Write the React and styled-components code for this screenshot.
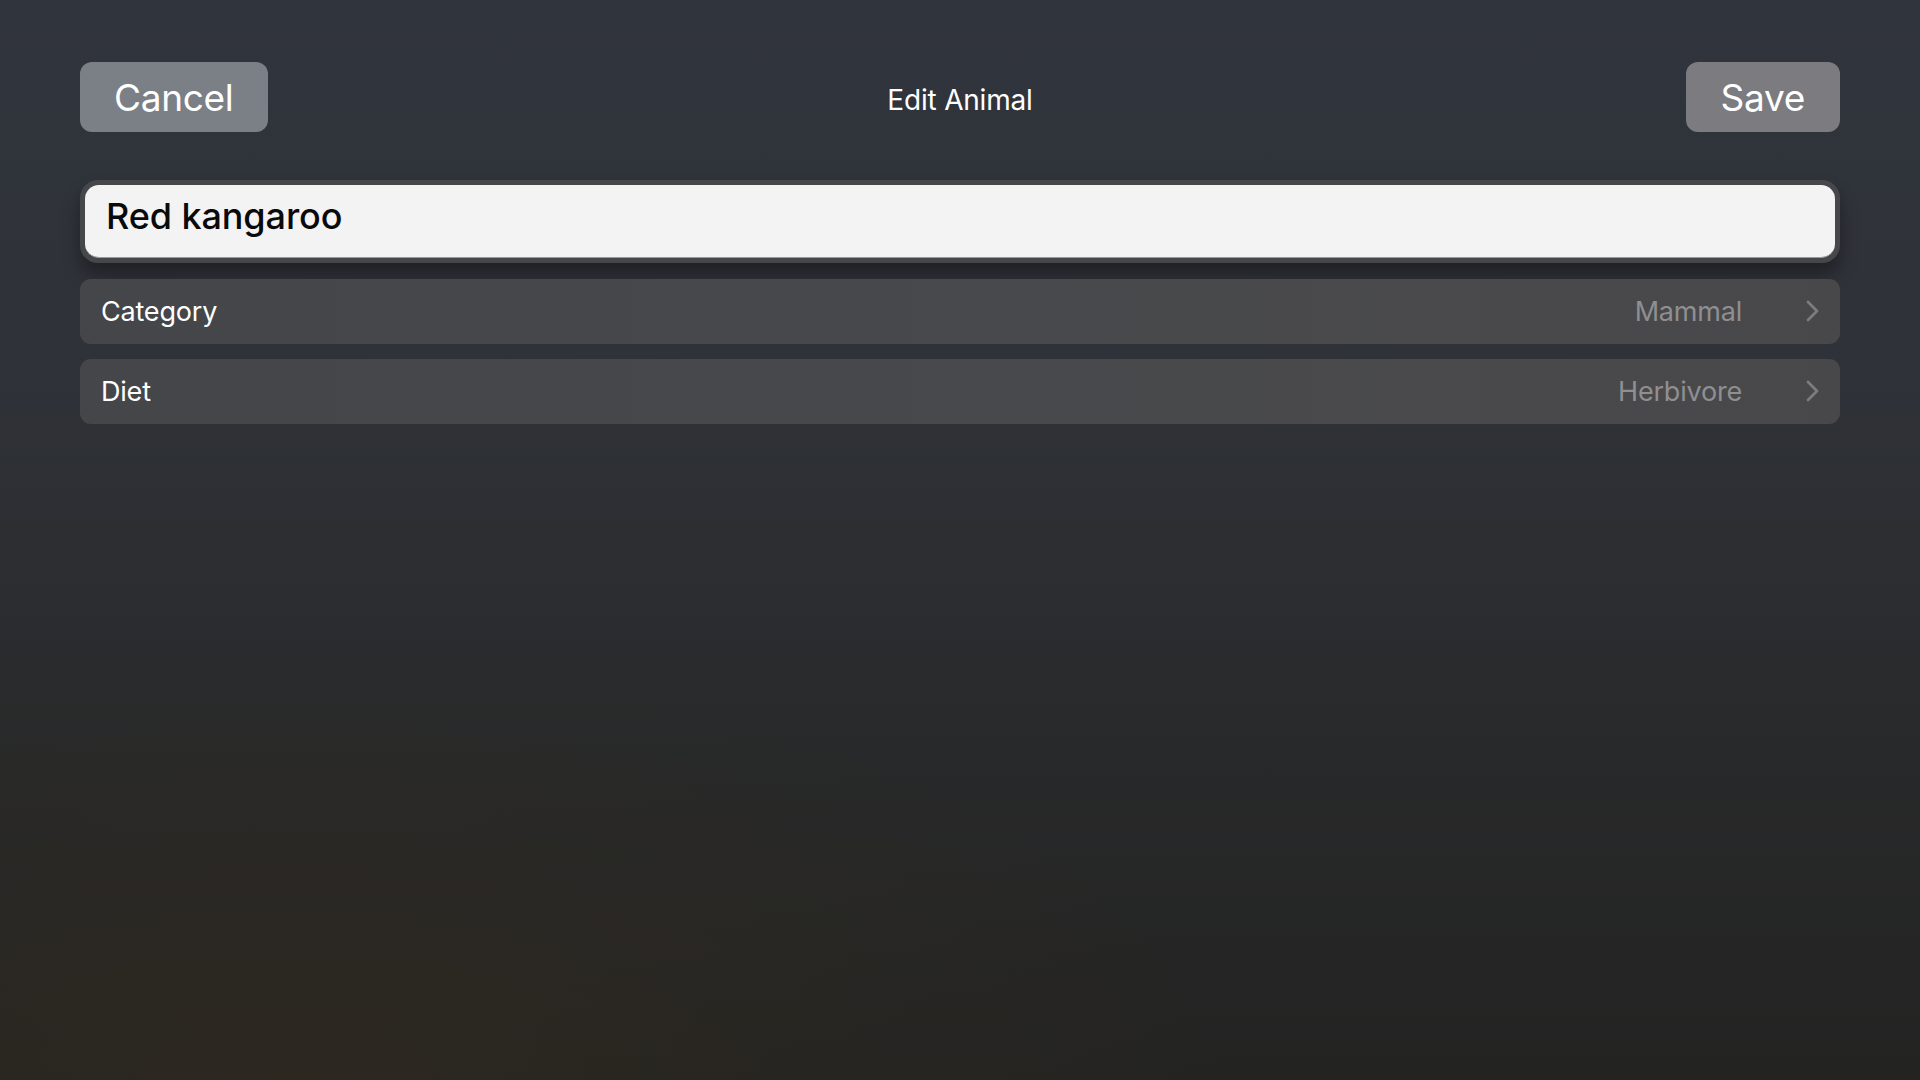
import React from "react";
import styled, { createGlobalStyle } from "styled-components";

const GlobalStyle = createGlobalStyle`
  html, body {
    margin: 0;
    padding: 0;
    height: 100%;
  }
  body {
    font-family: Inter, "Liberation Sans", Arial, sans-serif;
    background: #2a2b2d;
  }
`;

const Screen = styled.div`
  width: 1920px;
  height: 1080px;
  box-sizing: border-box;
  padding: 62px 80px 0 80px;
  background:
    radial-gradient(ellipse 70% 55% at 15% 100%, rgba(52, 44, 30, 0.55), rgba(52, 44, 30, 0) 70%),
    linear-gradient(180deg, #30343c 0%, #2f3238 35%, #28292a 70%, #232322 100%);
  overflow: hidden;
`;

const TopBar = styled.div`
  display: grid;
  grid-template-columns: 1fr auto 1fr;
  align-items: center;
  height: 70px;
`;

const BarButton = styled.button`
  justify-self: ${(p) => p.$side};
  height: 70px;
  padding: 0 ${(p) => p.$pad}px;
  border: none;
  border-radius: 12px;
  background: ${(p) => p.$bg};
  color: #ffffff;
  font-family: inherit;
  font-size: 37px;
  font-weight: 400;
  letter-spacing: -0.3px;
  cursor: pointer;
`;

const Title = styled.h1`
  margin: 5px 0 0;
  font-size: 28px;
  font-weight: 400;
  color: #ffffff;
  letter-spacing: -0.2px;
`;

const FieldFrame = styled.div`
  margin-top: 48px;
  padding: 5px;
  border-radius: 18px;
  background: #45474b;
  box-shadow: 0 12px 18px rgba(0, 0, 0, 0.35);
`;

const NameInput = styled.div`
  height: 73px;
  box-sizing: border-box;
  padding: 9px 21px 0;
  border-radius: 14px;
  background: #f3f3f3;
  border-bottom: 1px solid #9a9a9a;
  color: #0a0a0a;
  font-size: 36px;
  font-weight: 500;
  letter-spacing: -0.1px;
`;

const Rows = styled.div`
  display: flex;
  flex-direction: column;
  gap: 15px;
  margin-top: 16px;
`;

const Row = styled.div`
  display: flex;
  align-items: center;
  height: 65px;
  box-sizing: border-box;
  padding: 0 20px 0 21px;
  border-radius: 11px;
  background: linear-gradient(90deg, #44464a 0%, #46484b 45%, #4a4a4c 75%, #48484a 100%);
`;

const Label = styled.span`
  flex: 1;
  color: #ffffff;
  font-size: 27px;
  letter-spacing: -0.2px;
`;

const Value = styled.span`
  color: #8f8f92;
  font-size: 27px;
  letter-spacing: -0.2px;
`;

const Chevron = styled.svg`
  width: 14px;
  height: 22px;
  margin-left: 64px;
  margin-bottom: 2px;
`;

function Arrow() {
  return (
    <Chevron viewBox="0 0 14 22" fill="none">
      <path d="M2 2 L11 11 L2 20" stroke="#7c7c7f" strokeWidth="2.8" strokeLinecap="round" strokeLinejoin="round" />
    </Chevron>
  );
}

const fields = [
  { label: "Category", value: "Mammal" },
  { label: "Diet", value: "Herbivore" },
];

export default function App() {
  return (
    <>
      <GlobalStyle />
      <Screen>
        <TopBar>
          <BarButton $side="start" $bg="#7b7f86" $pad={34}>Cancel</BarButton>
          <Title>Edit Animal</Title>
          <BarButton $side="end" $bg="#7b7b80" $pad={35}>Save</BarButton>
        </TopBar>
        <FieldFrame>
          <NameInput>Red kangaroo</NameInput>
        </FieldFrame>
        <Rows>
          {fields.map((f) => (
            <Row key={f.label}>
              <Label>{f.label}</Label>
              <Value>{f.value}</Value>
              <Arrow />
            </Row>
          ))}
        </Rows>
      </Screen>
    </>
  );
}
